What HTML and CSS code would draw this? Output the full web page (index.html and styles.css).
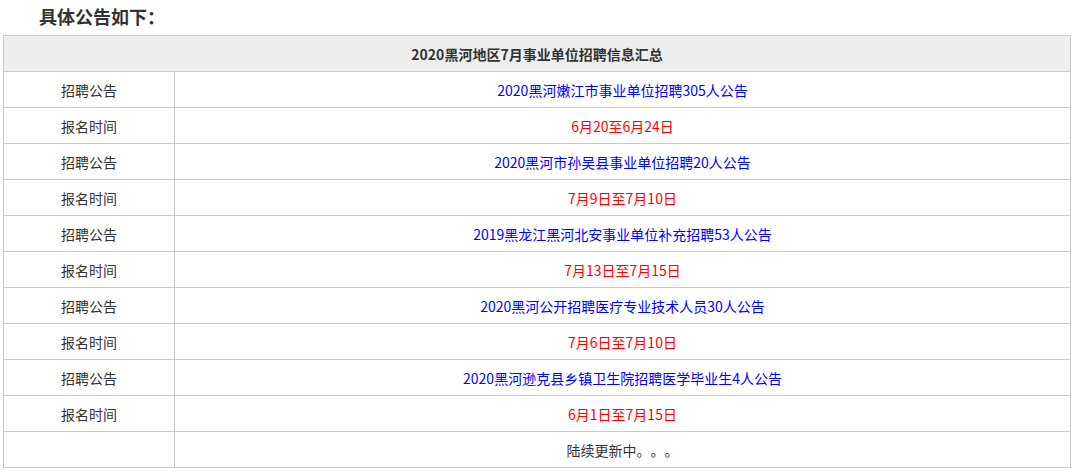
FILE: index.html
```html
<!DOCTYPE html>
<html lang="zh-CN">
<head>
<meta charset="utf-8">
<title>2020黑河地区7月事业单位招聘信息汇总</title>
<link rel="stylesheet" href="styles.css">
</head>
<body>
<div class="page">
  <h2 class="title">具体公告如下：</h2>
  <table class="info">
    <tr class="head"><th colspan="2">2020黑河地区7月事业单位招聘信息汇总</th></tr>
    <tr><td class="label">招聘公告</td><td class="link">2020黑河嫩江市事业单位招聘305人公告</td></tr>
    <tr><td class="label">报名时间</td><td class="date">6月20至6月24日</td></tr>
    <tr><td class="label">招聘公告</td><td class="link">2020黑河市孙吴县事业单位招聘20人公告</td></tr>
    <tr><td class="label">报名时间</td><td class="date">7月9日至7月10日</td></tr>
    <tr><td class="label">招聘公告</td><td class="link">2019黑龙江黑河北安事业单位补充招聘53人公告</td></tr>
    <tr><td class="label">报名时间</td><td class="date">7月13日至7月15日</td></tr>
    <tr><td class="label">招聘公告</td><td class="link">2020黑河公开招聘医疗专业技术人员30人公告</td></tr>
    <tr><td class="label">报名时间</td><td class="date">7月6日至7月10日</td></tr>
    <tr><td class="label">招聘公告</td><td class="link">2020黑河逊克县乡镇卫生院招聘医学毕业生4人公告</td></tr>
    <tr><td class="label">报名时间</td><td class="date">6月1日至7月15日</td></tr>
    <tr><td class="label"></td><td class="plain">陆续更新中。。。</td></tr>
  </table>
</div>
</body>
</html>
```
FILE: styles.css
```css
html, body {
  margin: 0;
  padding: 0;
  background: #fff;
}
body {
  font-family: "Microsoft YaHei", "Noto Sans CJK SC", "Noto Sans", sans-serif;
  color: #333;
  text-spacing-trim: space-all;
}
.page {
  padding: 0 3px;
}
.title {
  margin: 0 0 2px;
  font-size: 18px;
  line-height: 33px;
  font-weight: bold;
  text-indent: 2em;
  color: #333;
}
.info {
  width: 1068px;
  border-collapse: collapse;
  font-size: 14px;
}
.info th, .info td {
  border: 1px solid #ccc;
  height: 35px;
  padding: 0;
  text-align: center;
  vertical-align: middle;
  line-height: 20px;
}
.head th {
  background: #eee;
  font-weight: bold;
  color: #333;
}
.label {
  width: 170px;
  color: #333;
}
.link {
  color: #0000ff;
}
.date {
  color: #ff0000;
}
.plain {
  color: #333;
}
```
